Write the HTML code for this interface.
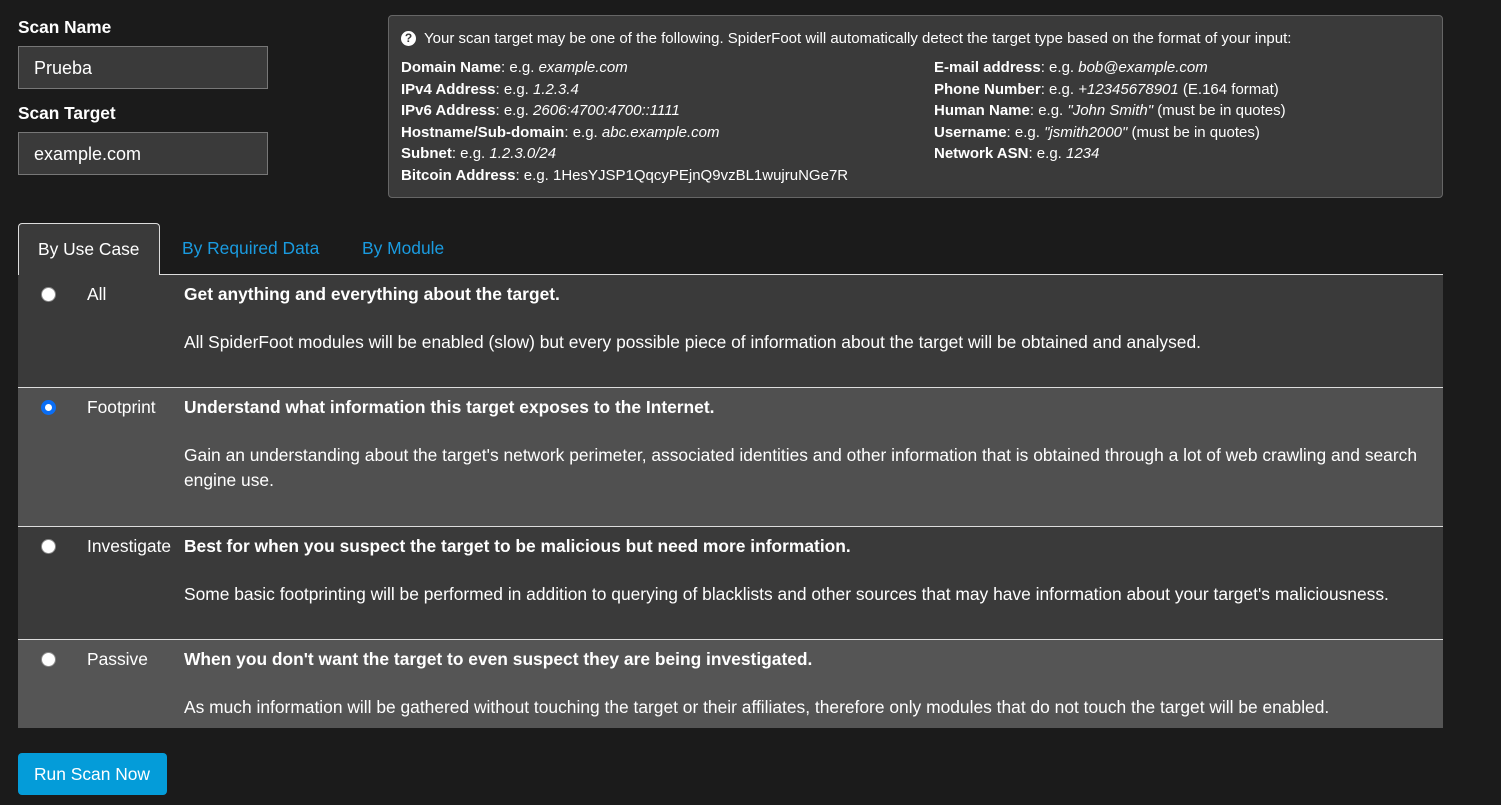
<!DOCTYPE html>
<html><head><style>
*{margin:0;padding:0;box-sizing:border-box}
body{width:1501px;height:805px;background:#1b1b1b;font-family:"Liberation Sans",Arial,sans-serif;color:#fff;position:relative;overflow:hidden}
.a{position:absolute;white-space:nowrap}
.lbl{font-weight:bold;font-size:17.3px}
.inp{position:absolute;left:18px;width:250px;height:43px;background:#3a3a3a;border:1px solid #777;font-size:18px;padding:11px 15px}
.info{position:absolute;left:388px;top:15px;width:1055px;height:183px;background:#3a3a3a;border:1px solid #666;border-radius:4px;font-size:15px}
.info b{font-weight:bold}
.row{position:absolute;left:18px;width:1425px;font-size:17.4px}
.row .r{position:absolute;left:23px;width:15px;height:15px;border-radius:50%;background:#fff;border:1px solid #888}
.row .n{position:absolute;left:69px}
.row .t{position:absolute;left:166px;font-weight:bold}
.row .d{position:absolute;left:166px;width:1255px;line-height:25px;white-space:normal}
</style></head><body>
<div class="a lbl" style="left:18px;top:17px">Scan Name</div>
<div class="inp" style="top:46px">Prueba</div>
<div class="a lbl" style="left:18px;top:103px">Scan Target</div>
<div class="inp" style="top:132px">example.com</div>

<div class="info">
<div class="a" style="left:12px;top:15px;width:15px;height:15px;border-radius:50%;background:#fff;color:#3a3a3a;font-size:12px;font-weight:bold;text-align:center;line-height:15px">?</div>
<div class="a" style="left:35px;top:14px">Your scan target may be one of the following. SpiderFoot will automatically detect the target type based on the format of your input:</div>
<div class="a" style="left:12px;top:41px;line-height:21.5px">
<b>Domain Name</b>: e.g. <i>example.com</i><br>
<b>IPv4 Address</b>: e.g. <i>1.2.3.4</i><br>
<b>IPv6 Address</b>: e.g. <i>2606:4700:4700::1111</i><br>
<b>Hostname/Sub-domain</b>: e.g. <i>abc.example.com</i><br>
<b>Subnet</b>: e.g. <i>1.2.3.0/24</i><br>
<b>Bitcoin Address</b>: e.g. 1HesYJSP1QqcyPEjnQ9vzBL1wujruNGe7R</div>
<div class="a" style="left:545px;top:41px;line-height:21.5px">
<b>E-mail address</b>: e.g. <i>bob@example.com</i><br>
<b>Phone Number</b>: e.g. <i>+12345678901</i> (E.164 format)<br>
<b>Human Name</b>: e.g. <i>"John Smith"</i> (must be in quotes)<br>
<b>Username</b>: e.g. <i>"jsmith2000"</i> (must be in quotes)<br>
<b>Network ASN</b>: e.g. <i>1234</i></div>
</div>

<div class="a" style="left:160px;top:274px;width:1283px;height:1px;background:#ddd"></div>
<div class="a" style="left:18px;top:223px;width:142px;height:53px;background:#3a3a3a;border:1px solid #ddd;border-bottom:none;border-radius:4px 4px 0 0;font-size:17.4px;padding:15px 0 0 19px">By Use Case</div>
<div class="a" style="left:182px;top:238px;font-size:17.4px;color:#1a9be0">By Required Data</div>
<div class="a" style="left:362px;top:238px;font-size:17.4px;color:#1a9be0">By Module</div>

<div class="row" style="top:275px;height:112px;background:#3a3a3a">
<div class="r" style="top:12px"></div><div class="a n" style="top:9px">All</div>
<div class="a t" style="top:9px">Get anything and everything about the target.</div>
<div class="d" style="top:55px">All SpiderFoot modules will be enabled (slow) but every possible piece of information about the target will be obtained and analysed.</div></div>
<div class="row" style="top:387px;height:1px;background:#ddd"></div>
<div class="row" style="top:388px;height:138px;background:#505050">
<div class="r" style="top:12px;border:4px solid #0a6ef5"></div><div class="a n" style="top:9px">Footprint</div>
<div class="a t" style="top:9px">Understand what information this target exposes to the Internet.</div>
<div class="d" style="top:55px">Gain an understanding about the target's network perimeter, associated identities and other information that is obtained through a lot of web crawling and search engine use.</div></div>
<div class="row" style="top:526px;height:1px;background:#ddd"></div>
<div class="row" style="top:527px;height:112px;background:#3a3a3a">
<div class="r" style="top:12px"></div><div class="a n" style="top:9px">Investigate</div>
<div class="a t" style="top:9px">Best for when you suspect the target to be malicious but need more information.</div>
<div class="d" style="top:55px">Some basic footprinting will be performed in addition to querying of blacklists and other sources that may have information about your target's maliciousness.</div></div>
<div class="row" style="top:639px;height:1px;background:#ddd"></div>
<div class="row" style="top:640px;height:88px;background:#555">
<div class="r" style="top:12px"></div><div class="a n" style="top:9px">Passive</div>
<div class="a t" style="top:9px">When you don't want the target to even suspect they are being investigated.</div>
<div class="d" style="top:55px">As much information will be gathered without touching the target or their affiliates, therefore only modules that do not touch the target will be enabled.</div></div>

<div class="a" style="left:18px;top:753px;width:149px;height:42px;background:#049cd9;border-radius:4px;font-size:17.4px;padding:11px 0 0 16px">Run Scan Now</div>
</body></html>
